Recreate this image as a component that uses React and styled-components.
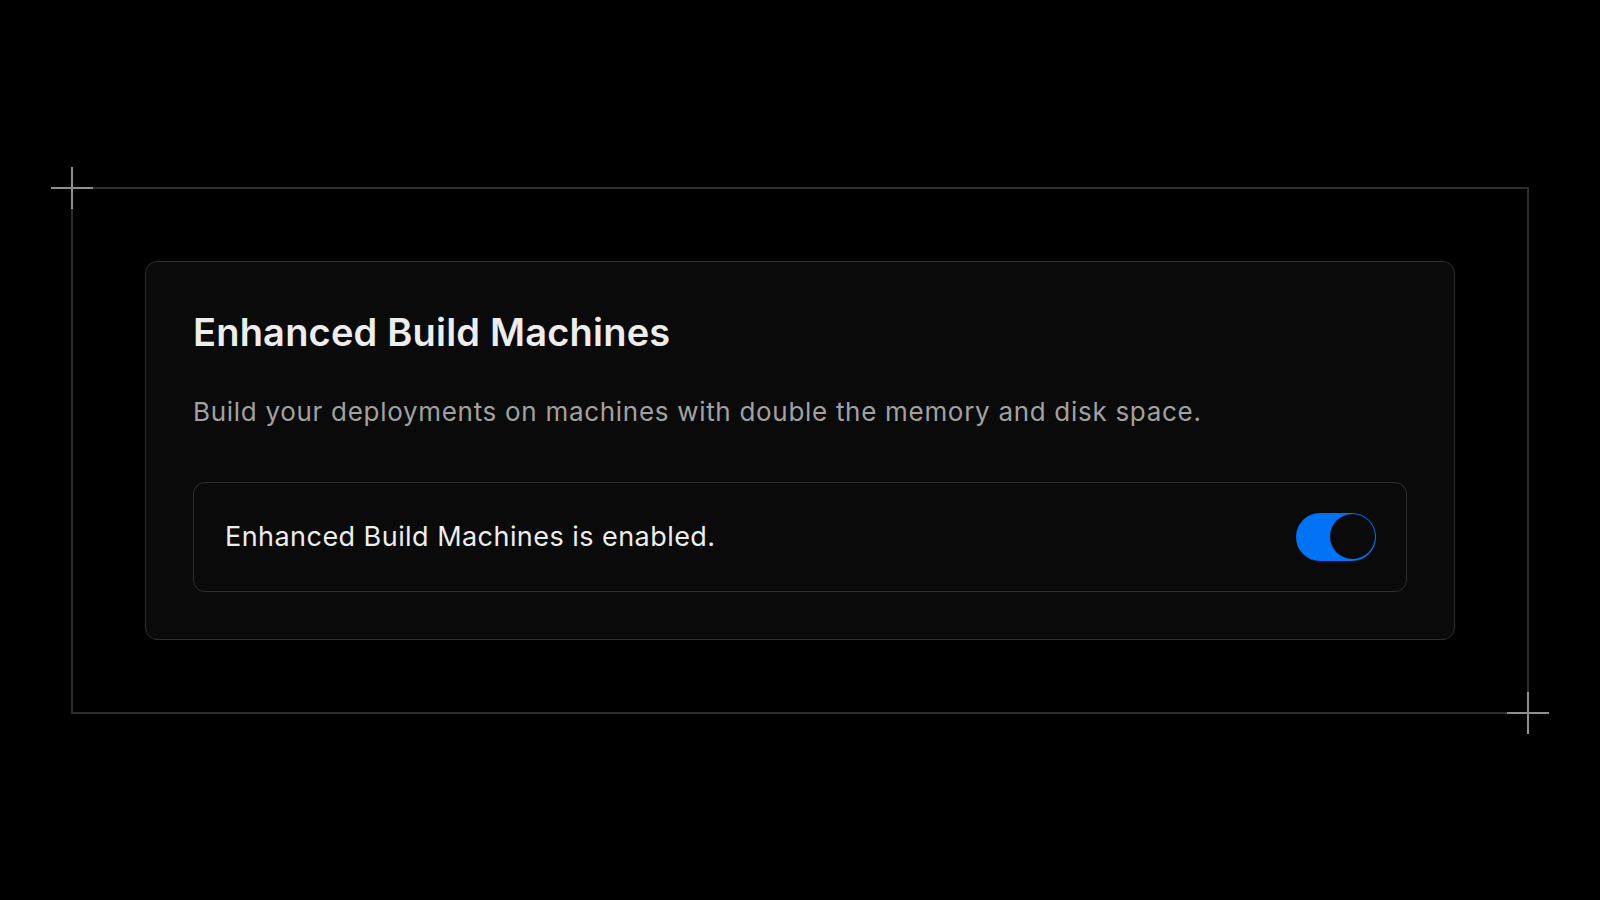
import React, { useState } from "react"
import styled, { createGlobalStyle } from "styled-components"

const colors = {
  page: "#000000",
  frame: "#2e2e2e",
  card: "#0a0a0a",
  cardBorder: "#2e2e2e",
  text: "#ededed",
  muted: "#a1a1a1",
  blue: "#0072f5",
  cross: "#8f8f8f",
}

const GlobalStyle = createGlobalStyle`
  html, body {
    margin: 0;
    padding: 0;
    background: ${colors.page};
  }
  body {
    font-family: Inter, "Noto Sans", "Liberation Sans", sans-serif;
    -webkit-font-smoothing: antialiased;
  }
`

const Page = styled.main`
  display: flex;
  justify-content: center;
  align-items: center;
  width: 100%;
  min-height: 100vh;
`

const Frame = styled.section`
  position: relative;
  box-sizing: border-box;
  width: 1458px;
  padding: 72px;
  border: 2px solid ${colors.frame};
`

const Cross = styled.span`
  position: absolute;
  width: 42px;
  height: 42px;
  pointer-events: none;
  ${props =>
    props.corner === "tl"
      ? `top: -22px; left: -22px;`
      : `bottom: -22px; right: -22px;`}

  &::before,
  &::after {
    content: "";
    position: absolute;
    background: ${colors.cross};
  }
  &::before {
    left: 0;
    right: 0;
    top: 20px;
    height: 2px;
  }
  &::after {
    top: 0;
    bottom: 0;
    left: 20px;
    width: 2px;
  }
`

const Card = styled.div`
  box-sizing: border-box;
  width: 100%;
  padding: 47px;
  background: ${colors.card};
  border: 1px solid ${colors.cardBorder};
  border-radius: 12px;
`

const Title = styled.h2`
  margin: 0;
  font-size: 38px;
  line-height: 46px;
  font-weight: 600;
  letter-spacing: 0.2px;
  color: ${colors.text};
`

const Description = styled.p`
  margin: 37px 0 51px;
  font-size: 26px;
  line-height: 39px;
  font-weight: 400;
  letter-spacing: 0.7px;
  color: ${colors.muted};
`

const StatusRow = styled.div`
  display: flex;
  align-items: center;
  justify-content: space-between;
  box-sizing: border-box;
  height: 110px;
  padding: 0 30px 0 31px;
  border: 1px solid ${colors.cardBorder};
  border-radius: 12px;
`

const StatusText = styled.span`
  font-size: 27px;
  line-height: 40px;
  font-weight: 400;
  letter-spacing: 0.45px;
  color: ${colors.text};
`

const Switch = styled.button`
  position: relative;
  width: 80px;
  height: 48px;
  padding: 0;
  border: none;
  border-radius: 24px;
  cursor: pointer;
  background: ${props => (props.on ? colors.blue : "#333")};
  transition: background-color 0.15s ease-in-out;
`

const Knob = styled.span`
  position: absolute;
  top: 1.5px;
  left: ${props => (props.on ? "33.5px" : "1.5px")};
  box-sizing: border-box;
  width: 45px;
  height: 45px;
  border-radius: 50%;
  background: ${colors.card};
  transition: left 0.15s ease-in-out;
`

const App = () => {
  const [enabled, setEnabled] = useState(true)

  return (
    <>
      <GlobalStyle />
      <Page>
        <Frame>
          <Cross corner="tl" />
          <Cross corner="br" />
          <Card>
            <Title>Enhanced Build Machines</Title>
            <Description>
              Build your deployments on machines with double the memory and
              disk space.
            </Description>
            <StatusRow>
              <StatusText>
                Enhanced Build Machines is {enabled ? "enabled" : "disabled"}.
              </StatusText>
              <Switch
                on={enabled ? 1 : 0}
                aria-pressed={enabled}
                onClick={() => setEnabled(!enabled)}
              >
                <Knob on={enabled ? 1 : 0} />
              </Switch>
            </StatusRow>
          </Card>
        </Frame>
      </Page>
    </>
  )
}

export default App
